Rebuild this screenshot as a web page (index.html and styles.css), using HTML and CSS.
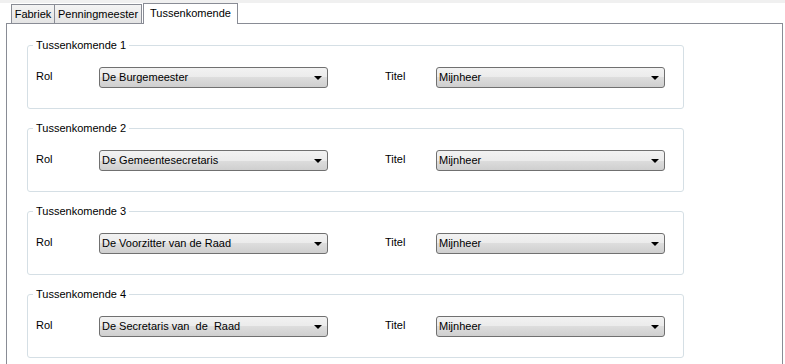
FILE: index.html
```html
<!DOCTYPE html>
<html>
<head>
<meta charset="utf-8">
<link rel="stylesheet" href="styles.css">
</head>
<body>
<div class="strip"></div>
<div class="tabs">
  <div class="tab tab-fabriek">Fabriek</div>
  <div class="tab tab-penning">Penningmeester</div>
  <div class="tab tab-active">Tussenkomende</div>
</div>
<div class="panel">
  <div class="group">
    <span class="group-title">Tussenkomende 1</span>
    <div class="row">
      <span class="label label-rol">Rol</span>
      <div class="combo"><span class="combo-text">De Burgemeester</span><span class="arrow"></span></div>
      <span class="label label-titel">Titel</span>
      <div class="combo"><span class="combo-text">Mijnheer</span><span class="arrow"></span></div>
    </div>
  </div>
  <div class="group">
    <span class="group-title">Tussenkomende 2</span>
    <div class="row">
      <span class="label label-rol">Rol</span>
      <div class="combo"><span class="combo-text">De Gemeentesecretaris</span><span class="arrow"></span></div>
      <span class="label label-titel">Titel</span>
      <div class="combo"><span class="combo-text">Mijnheer</span><span class="arrow"></span></div>
    </div>
  </div>
  <div class="group">
    <span class="group-title">Tussenkomende 3</span>
    <div class="row">
      <span class="label label-rol">Rol</span>
      <div class="combo"><span class="combo-text">De Voorzitter van de Raad</span><span class="arrow"></span></div>
      <span class="label label-titel">Titel</span>
      <div class="combo"><span class="combo-text">Mijnheer</span><span class="arrow"></span></div>
    </div>
  </div>
  <div class="group">
    <span class="group-title">Tussenkomende 4</span>
    <div class="row">
      <span class="label label-rol">Rol</span>
      <div class="combo"><span class="combo-text">De Secretaris van&nbsp; de&nbsp; Raad</span><span class="arrow"></span></div>
      <span class="label label-titel">Titel</span>
      <div class="combo"><span class="combo-text">Mijnheer</span><span class="arrow"></span></div>
    </div>
  </div>
</div>
</body>
</html>
```

FILE: styles.css
```css
html, body {
  margin: 0;
  padding: 0;
  background: #ffffff;
  overflow: hidden;
}
body {
  font-family: "Liberation Sans", Arial, sans-serif;
  font-size: 11px;
  line-height: 13px;
  color: #000000;
  width: 785px;
  height: 364px;
}
.strip {
  height: 3px;
  background: #f0f0f0;
}
.tabs {
  display: flex;
  align-items: flex-start;
  height: 20px;
  padding-left: 11px;
  position: relative;
  z-index: 2;
}
.tab {
  box-sizing: border-box;
  margin-top: 1px;
  height: 19px;
  padding-top: 3px;
  border: 1px solid #898c95;
  border-bottom: none;
  background: linear-gradient(#f4f4f4, #e4e4e4);
  text-align: center;
  white-space: nowrap;
}
.tab-fabriek {
  width: 44px;
}
.tab-penning {
  width: 87px;
  border-left: none;
}
.tab-active {
  margin-top: 0;
  margin-left: 1px;
  width: 95px;
  height: 21px;
  padding-top: 3px;
  background: #ffffff;
}
.panel {
  margin-left: 6px;
  width: 777px;
  height: 341px;
  box-sizing: border-box;
  border: 1px solid #898c95;
  border-bottom: none;
  padding: 21px 0 0 20px;
  display: flex;
  flex-direction: column;
  gap: 19px;
  overflow: hidden;
}
.group {
  position: relative;
  box-sizing: border-box;
  flex: none;
  width: 657px;
  height: 64px;
  border: 1px solid #d5dfe5;
  border-radius: 3px;
  padding: 21px 0 0 8px;
}
.group-title {
  position: absolute;
  top: -7px;
  left: 5px;
  padding: 0 3px;
  background: #ffffff;
  line-height: 13px;
}
.row {
  display: flex;
  align-items: flex-start;
}
.label {
  margin-top: 3px;
}
.label-rol {
  width: 63px;
}
.label-titel {
  margin-left: 57px;
  width: 51px;
}
.combo {
  box-sizing: border-box;
  width: 229px;
  height: 21px;
  border: 1px solid #707070;
  border-radius: 3px;
  background: linear-gradient(#f2f2f2 0%, #ebebeb 50%, #dddddd 50%, #cfcfcf 100%);
  display: flex;
  align-items: center;
  justify-content: space-between;
  padding: 0 5px 0 2px;
}
.combo-text {
  line-height: 19px;
  white-space: pre;
}
.arrow {
  width: 0;
  height: 0;
  border-left: 4px solid transparent;
  border-right: 4px solid transparent;
  border-top: 4px solid #000000;
  margin-top: 1px;
}
```
